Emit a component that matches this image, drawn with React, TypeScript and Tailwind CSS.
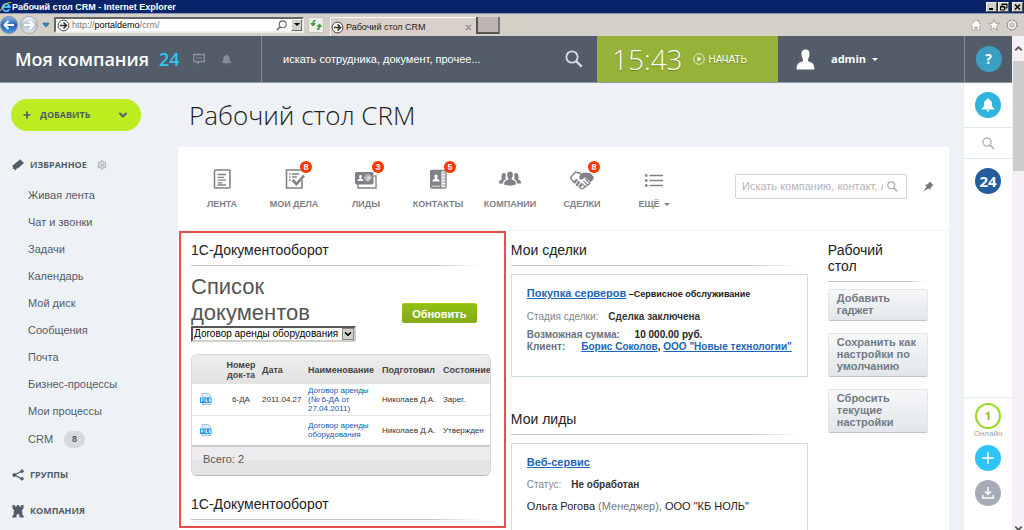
import type { ReactNode } from "react"
import { ChevronDown, ChevronUp, Plus, Settings } from "lucide-react"

const menu = [
  "Живая лента",
  "Чат и звонки",
  "Задачи",
  "Календарь",
  "Мой диск",
  "Сообщения",
  "Почта",
  "Бизнес-процессы",
  "Мои процессы",
]

const documents = [
  { number: "6-ДА", date: "2011.04.27", name: "Договор аренды (№ 6-ДА от 27.04.2011)", author: "Николаев Д.А.", state: "Зарег." },
  { number: "", date: "", name: "Договор аренды оборудования", author: "Николаев Д.А.", state: "Утвержден" },
]

function PageIcon({ className }: { className?: string }) {
  return (
    <svg viewBox="0 0 14 14" className={className} fill="none" stroke="#333" aria-hidden="true">
      <circle cx="7" cy="7" r="5.8" fill="#fff" />
      <path d="M3 7h7M7 3.8 10.2 7 7 10.2" strokeWidth="1.8" />
    </svg>
  )
}

function SearchIcon({ className }: { className?: string }) {
  return (
    <svg viewBox="0 0 20 20" className={className} fill="none" stroke="currentColor" aria-hidden="true">
      <circle cx="7.800" cy="7.800" r="6.300" strokeWidth="2" />
      <path d="m12.500 12.500 6 6" strokeWidth="2.600" />
    </svg>
  )
}

function BellIcon({ className }: { className?: string }) {
  return (
    <svg viewBox="0 0 14 14" className={className} fill="currentColor" aria-hidden="true">
      <path d="M7 .5c.8 0 1.200.5 1.200 1.200C10.500 2.400 11 4.300 11 6.200c0 2.600.6 3.300 2.200 4.300v1H.8v-1C2.400 9.500 3 8.800 3 6.200c0-1.900.5-3.800 2.800-4.500C5.800 1 6.200.5 7 .5zM5.500 12.200h3c0 .8-.6 1.300-1.500 1.300s-1.500-.5-1.500-1.300z" />
    </svg>
  )
}

function BrowserChrome() {
  return (
    <div>
      <div className="flex h-[13px] items-center bg-[#0a246a] text-white">
        <svg viewBox="0 0 14 14" className="h-3 w-3 shrink-0" fill="none" aria-hidden="true">
          <path d="M11 9.5A4.200 4.200 0 1 1 11.400 7H3.400" stroke="#4db8f5" strokeWidth="2.200" />
          <path d="M1 12C-.5 9 8 0 13 2" stroke="#f5c542" strokeWidth="1.100" />
        </svg>
        <span className="flex-1 font-['Liberation_Sans',sans-serif] text-[9px] leading-3 font-bold">
          Рабочий стол CRM - Internet Explorer
        </span>
        <div className="flex gap-px pr-px">
          <button aria-label="Свернуть" className="flex h-[10px] w-[11px] items-end border border-[#f5f3ef] border-r-[#555] border-b-[#555] bg-[#d4d0c8] pb-px pl-0.5">
            <span className="h-0.5 w-1 bg-black" />
          </button>
          <button aria-label="Восстановить" className="h-[10px] w-[11px] border border-[#f5f3ef] border-r-[#555] border-b-[#555] bg-[#d4d0c8]">
            <svg viewBox="0 0 9 8" fill="none" stroke="#000" aria-hidden="true">
              <path d="M3 3V1h5v4H6M3 1.500h5" />
              <path d="M1.500 3.500h4v3.500h-4zM1 4h5" />
            </svg>
          </button>
          <button aria-label="Закрыть" className="ml-0.5 h-[10px] w-[11px] border border-[#f5f3ef] border-r-[#555] border-b-[#555] bg-[#d4d0c8]">
            <svg viewBox="0 0 9 8" stroke="#000" strokeWidth="1.400" aria-hidden="true">
              <path d="m2 1.500 5 5M7 1.500l-5 5" />
            </svg>
          </button>
        </div>
      </div>
      <div className="flex h-[23px] items-center border-t border-[#8b97b8] bg-[#d4d0c8] text-[9px] text-[#222]">
        <button aria-label="Назад" className="h-[18px] w-[18px] rounded-full border border-[#7b8ba3] bg-linear-to-b from-[#7fb0ea] via-[#2660b8] to-[#3f9be6]">
          <svg viewBox="0 0 16 16" fill="none" stroke="#fff" strokeWidth="2" aria-hidden="true">
            <path d="M13 8H4M7.500 4 3.500 8l4 4" />
          </svg>
        </button>
        <button aria-label="Вперёд" className="ml-0.5 h-[18px] w-[18px] rounded-full border border-[#a4a9b1] bg-linear-to-b from-[#f3f4f6] via-[#b5c0cf] to-[#dde4ec]">
          <svg viewBox="0 0 16 16" fill="none" stroke="#fff" strokeWidth="2" aria-hidden="true">
            <path d="M3 8h9M8.500 4l4 4-4 4" />
          </svg>
        </button>
        <svg viewBox="0 0 8 6" className="ml-1 h-[6px] w-2" fill="#2f83c4" stroke="#285b85" strokeWidth=".5" aria-hidden="true">
          <path d="M1 1h6v1L4 5 1 2z" />
        </svg>
        <div className="ml-1 flex h-4 w-[250px] items-center border-2 border-t-[#666] border-r-[#eee] border-b-[#eee] border-l-[#666] bg-white">
          <PageIcon className="mr-0.5 ml-px h-[13px] w-[13px] shrink-0" />
          <div role="textbox" aria-label="Адрес" className="flex flex-1 leading-3 whitespace-nowrap text-[#777]">
            http://<span className="text-black">portaldemo</span>/crm/
          </div>
          <SearchIcon className="h-[11px] w-[11px] -scale-x-100 text-[#666]" />
          <button aria-label="Список адресов" className="ml-1 flex h-3 w-[11px] items-center justify-center border border-white border-r-[#666] border-b-[#666] bg-[#d4d0c8]">
            <svg viewBox="0 0 6 4" className="w-1.5" aria-hidden="true">
              <path d="M0 0h6L3 3z" />
            </svg>
          </button>
        </div>
        <button aria-label="Обновить страницу" className="ml-1 flex h-4 w-4 items-center justify-center border border-[#c4c4c4] bg-[#eeedea]">
          <svg viewBox="0 0 14 14" className="w-3.5" fill="#3d9b35" stroke="#3d9b35" aria-hidden="true">
            <path d="M6.500 2.500Q4 2.500 4 6" fill="none" strokeWidth="1.500" />
            <path d="M1.800 5.500h4.400L4 8z" />
            <path d="M8 11.500q2.500 0 2.500-3.500" fill="none" strokeWidth="1.500" />
            <path d="M8.300 8.500h4.400L10.500 6z" />
          </svg>
        </button>
        <div className="ml-1.5 flex h-[19px] w-[146px] items-center self-end border-t border-l border-white bg-[#d9d0ca]">
          <PageIcon className="mr-0.5 h-[13px] w-[13px] shrink-0" />
          <span className="flex-1 leading-3">Рабочий стол CRM</span>
          <button aria-label="Закрыть вкладку" className="mr-1">
            <svg viewBox="0 0 8 8" className="h-[7px] w-[7px]" stroke="#888" strokeWidth="1.400" aria-hidden="true">
              <path d="m1 1 6 6M7 1 1 7" />
            </svg>
          </button>
        </div>
        <button aria-label="Новая вкладка" className="h-[17px] w-6 border-r-2 border-b-2 border-l-2 border-[#555] border-r-[#777] bg-[#bdb5b3]" />
        <div className="ml-auto flex gap-1.5 pr-1.5">
          <svg viewBox="0 0 12 12" className="h-3 w-3" fill="#fff" stroke="#999" strokeWidth=".8" aria-hidden="true">
            <path d="M6 .8.5 6.300l.9.900.8-.6v4.900h2.600V8h2.400v3.500h2.600V6.600l.8.600.9-.9L9.300 4V1.500H8v1.300z" />
          </svg>
          <svg viewBox="0 0 12 12" className="h-3 w-3" fill="#fff" stroke="#999" strokeWidth=".8" aria-hidden="true">
            <path d="m6 .5 1.500 3.800 4 .2-3.100 2.600 1 4L6 8.900l-3.400 2.200 1-4L.5 4.500l4-.2z" />
          </svg>
          <svg viewBox="0 0 12 12" className="h-3 w-3" fill="none" aria-hidden="true">
            <circle cx="6" cy="6" r="4.700" stroke="#999" strokeWidth="2" strokeDasharray="2.200 1.490" />
            <circle cx="6" cy="6" r="3.300" stroke="#999" strokeWidth="2.600" />
            <circle cx="6" cy="6" r="3.300" stroke="#fff" strokeWidth="1.400" />
          </svg>
        </div>
      </div>
    </div>
  )
}

function Header() {
  return (
    <header className="flex h-[47px] shrink-0 border-b border-[#8f98a3] bg-[#535c69] font-['Open_Sans','Noto_Sans',sans-serif] text-white">
      <div className="flex w-[262px] shrink-0 items-center border-r border-[#838b96] pl-[15px]">
        <span className="text-lg font-semibold">Моя компания</span>
        <span className="ml-2.5 text-lg font-semibold text-[#2fc6f6]">24</span>
        <button aria-label="Сообщения" className="ml-[13px]">
          <svg viewBox="0 0 12 12" className="h-3 w-3" fill="none" stroke="#8b929c" aria-hidden="true">
            <path d="M.7 1.500h10.600v7H6.500L4.500 10.500V8.500H.7z" strokeWidth="1.300" />
            <path d="M3 5h1.200M5.400 5h1.200M7.800 5H9" strokeWidth="1.300" />
          </svg>
        </button>
        <button aria-label="Уведомления" className="ml-4">
          <BellIcon className="h-[11px] w-[11px] text-[#858c97]" />
        </button>
      </div>
      <div className="flex flex-1 items-center pr-3.5 pl-[21px]">
        <input
          type="text"
          aria-label="Поиск"
          placeholder="искать сотрудника, документ, прочее..."
          className="min-w-0 flex-1 font-['Liberation_Sans',sans-serif] text-[11px] placeholder:text-white"
        />
        <button aria-label="Найти">
          <SearchIcon className="h-[18px] w-[18px] text-[#dadde1]" />
        </button>
      </div>
      <div className="flex w-[181px] shrink-0 items-center bg-[#95b239]">
        <span className="ml-[15px] text-[28px] font-light [text-shadow:0_1px_1px_#6b8322]">15:43</span>
        <button className="ml-2.5 flex items-center gap-1 font-['Liberation_Sans',sans-serif] text-[10px] [text-shadow:0_1px_1px_#6b8322]">
          <svg viewBox="0 0 12 12" className="h-3 w-3" fill="none" stroke="#e3ecc8" aria-hidden="true">
            <circle cx="6" cy="6" r="5.300" />
            <path d="M4.500 3.500v5L8.500 6z" fill="#fff" stroke="none" />
          </svg>
          НАЧАТЬ
        </button>
      </div>
      <button className="flex w-[186px] shrink-0 items-center pl-[18px] text-[11px] font-bold">
        <svg viewBox="0 0 20 22" className="h-[21px] w-[19px]" fill="#fff" aria-hidden="true">
          <path d="M10 .5c3.200 0 4.300 2 4.200 5.300C14 9 12.800 10 12.600 11.500c0 1 .6 1.500 2 2 3.500 1 4.600 2.500 4.800 8H.6c.2-5.500 1.300-7 4.800-8 1.400-.5 2-1 2-2C7.200 10 6 9 5.800 5.800 5.700 2.500 6.800.5 10 .5z" />
        </svg>
        <span className="ml-4">admin</span>
        <span className="ml-1.5 border-x-[3px] border-t-[3px] border-x-transparent border-t-white" />
      </button>
      <div className="flex w-12 shrink-0 items-center justify-center border-l border-[#838b96]">
        <button className="h-[26px] w-[26px] rounded-full bg-[#3a9fc1] text-sm font-bold">?</button>
      </div>
    </header>
  )
}

function SectionTitle({ icon, children }: { icon: ReactNode; children: ReactNode }) {
  return (
    <h3 className="flex h-[18px] items-center gap-1.5 font-['Open_Sans','Noto_Sans',sans-serif] text-[9px] font-bold">
      {icon}
      {children}
    </h3>
  )
}

function Sidebar() {
  return (
    <aside className="w-[178px] shrink-0 text-[#535c69]">
      <button className="mt-4 ml-[11px] flex h-8 w-[130px] items-center rounded-full bg-[#bbed21] pr-3 pl-[11px] font-['Open_Sans','Noto_Sans',sans-serif] text-[9px] font-bold">
        <Plus className="h-[10px] w-[10px]" strokeWidth={4} />
        <span className="ml-2 flex-1 text-left">ДОБАВИТЬ</span>
        <ChevronDown className="h-3 w-3" strokeWidth={4} />
      </button>
      <div className="mt-[25px] pl-3">
        <SectionTitle
          icon={
            <svg viewBox="0 0 12 12" className="h-3 w-3" fill="currentColor" aria-hidden="true">
              <path d="M8.300.3 9.500 1.500l.4 1 1 .3 1 1.200L6 9.200l-1.400.2-.9 2.300-1.100-1.500L.3 9.500l.9-1.300-.8-1.500z" />
            </svg>
          }
        >
          ИЗБРАННОЕ
          <Settings className="ml-1 h-[10px] w-[10px] text-[#b3b8be]" strokeWidth={3} />
        </SectionTitle>
      </div>
      <nav className="mt-2 pl-[28px] text-[11px]">
        {menu.map((item) => (
          <a key={item} href="#" className="block h-[27px] leading-[27px]">
            {item}
          </a>
        ))}
        <a href="#" className="flex h-[29px] items-center">
          CRM
          <span className="ml-[11px] h-[17px] w-[21px] rounded-full bg-[#d5dadc] text-center text-[9px] leading-[17px] font-bold">8</span>
        </a>
      </nav>
      <div className="mt-3 space-y-[18px] pl-3">
        <SectionTitle
          icon={
            <svg viewBox="0 0 12 12" className="h-3 w-3" fill="currentColor" stroke="currentColor" aria-hidden="true">
              <path d="M10 2 2.500 6l7.500 4" fill="none" strokeWidth="1.400" />
              <circle cx="10" cy="2.200" r="1.300" />
              <circle cx="2.300" cy="6" r="1.500" />
              <circle cx="10" cy="9.800" r="1.300" />
            </svg>
          }
        >
          ГРУППЫ
        </SectionTitle>
        <SectionTitle
          icon={
            <svg viewBox="0 0 12 13" className="h-[13px] w-3" fill="currentColor" aria-hidden="true">
              <path d="M.5 0h2.300v1.500h2V0h2.400v1.500h2V0h2.300v3.500L10 5l.5 5 1.200 1v1.500H7.500v-2a1.500 1.500 0 0 0-3 0v2H.3V11l1.200-1L2 5 .5 3.500z" />
            </svg>
          }
        >
          КОМПАНИЯ
        </SectionTitle>
      </div>
    </aside>
  )
}

const tabs: { title: string; count?: number; more?: boolean; icon: ReactNode }[] = [
  {
    title: "ЛЕНТА",
    icon: (
      <g fill="none" stroke="currentColor">
        <rect x="3.500" y="2" width="15.500" height="18" rx="1" strokeWidth="1.600" />
        <path d="M6.500 6.500H15M6.500 9.300h6.500M6.500 12.100H15M6.500 14.900h5M6.500 17H15" strokeWidth="1.300" />
      </g>
    ),
  },
  {
    title: "МОИ ДЕЛА",
    count: 8,
    icon: (
      <g fill="none" stroke="currentColor">
        <path d="M19 12v8H3.500V2H19" strokeWidth="1.600" />
        <path d="M6 6h1.500M9 6h7M6 9h1.500M9 9h5M6 12h1.500" strokeWidth="1.300" />
        <path d="m9.500 12 4 4L21 7.500" strokeWidth="2.600" />
      </g>
    ),
  },
  {
    title: "ЛИДЫ",
    count: 3,
    icon: (
      <g>
        <path d="M3 16v4h18V8h-2" fill="none" stroke="currentColor" strokeWidth="1.400" />
        <rect x="0" y="4" width="18.500" height="12.500" rx="1.500" fill="currentColor" />
        <path d="M5.500 7c1.600 0 1.600 2.500.6 3.700 1.700.5 2.300.8 2.300 2.300H2.600c0-1.500.6-1.800 2.300-2.300C3.900 9.500 3.900 7 5.500 7z" fill="#fff" />
        <circle cx="13" cy="10" r="1.300" fill="none" stroke="#fff" />
        <path d="M14.500 8.500v2.500c.8.500 1.500-.2 1.500-1.200A3 3 0 1 0 14.500 12.500" fill="none" stroke="#fff" strokeWidth=".8" />
      </g>
    ),
  },
  {
    title: "КОНТАКТЫ",
    count: 5,
    icon: (
      <g>
        <rect x="4" y="2.500" width="15" height="17.500" rx="1" fill="#fff" stroke="currentColor" strokeWidth="1.300" />
        <path d="M4.500 2H14.500v18H4.500C3.500 20 3 19.500 3 18.500v-15C3 2.500 3.500 2 4.500 2z" fill="currentColor" />
        <path d="M15.500 5h3M15.500 8h3M15.500 11h3M15.500 14h3M15.500 17h3" stroke="currentColor" />
        <path d="M9 6.500c1.900 0 1.900 3 .8 4.300 1.900.5 2.700.9 2.700 2.700h-7c0-1.800.8-2.200 2.700-2.700C7.100 9.500 7.100 6.500 9 6.500z" fill="#fff" />
        <path d="M4.500 18.200H13" stroke="#fff" strokeWidth=".8" />
      </g>
    ),
  },
  {
    title: "КОМПАНИИ",
    icon: (
      <g fill="currentColor">
        <path d="M5 5c2 0 2.400 2.500 1.200 4.800 1 1 .8 1.200 0 1.800-1.600.8-2 2-2 3.900H-.2c0-2.500.8-3 3.200-4.200C1.800 9.500 2.500 5 5 5zM17 5c-2 0-2.400 2.500-1.200 4.800-1 1-.8 1.200 0 1.800 1.600.8 2 2 2 3.900h4.400c0-2.500-.8-3-3.200-4.200C20.200 9.500 19.500 5 17 5z" />
        <path d="M11 3.500c3.300 0 3.600 4 1.700 6.800-.2 1.200.5 1.400 1.800 1.900 2 .8 2.300 1.800 2.300 4.300-3 1.300-8.600 1.300-11.600 0 0-2.500.3-3.500 2.300-4.300 1.300-.5 2-.7 1.800-1.900C7.400 7.500 7.700 3.500 11 3.500z" />
      </g>
    ),
  },
  {
    title: "СДЕЛКИ",
    count: 8,
    icon: (
      <g>
        <path d="M10 5.500 4.500 4-.5 9.500 1.500 13l2 1" fill="none" stroke="currentColor" strokeWidth="1.400" />
        <path d="M9.500 6 13 4.500l6.500.8 3.500 4-1.500 3.200-2 1.500-5.500-4.500-4 2.500L8 10z" fill="currentColor" />
        <path d="m3.500 14.500 2-2.500M5.800 17 8 14M8.500 18.800l2-2.500" stroke="currentColor" strokeWidth="2.200" strokeLinecap="round" />
        <path d="m9 20 2.500.8 8-5.800M12.500 13l4 4M10.500 15.500l4 3.500M14.500 11l4.500 4.500" fill="none" stroke="currentColor" strokeWidth="1.100" />
      </g>
    ),
  },
  {
    title: "ЕЩЁ",
    more: true,
    icon: (
      <g stroke="currentColor" strokeWidth="1.700">
        <path d="M6.500 7.500H20M6.500 12.500H20M6.500 17.500H20" />
        <path d="M2 7.500h2.500M2 12.500h2.500M2 17.500h2.500" strokeWidth="2.500" />
      </g>
    ),
  },
]

function CrmTabs() {
  return (
    <div className="flex h-[84px] items-start border-b border-[#f2f3f4] pt-[21px] pr-[15px] pl-2">
      <nav className="flex text-[#808287]">
        {tabs.map((tab) => (
          <a key={tab.title} href="#" className="flex w-18 flex-col items-center text-[9px] font-bold">
            <span className="relative">
              <svg viewBox="0 0 22 22" className="h-[22px] w-[22px] overflow-visible" aria-hidden="true">
                {tab.icon}
              </svg>
              {tab.count && (
                <span className="absolute -top-[7px] left-[17px] h-3 w-3 rounded-full bg-[#ff3500] text-center text-[9px] leading-3 text-white">
                  {tab.count}
                </span>
              )}
            </span>
            <span className="mt-1.5 flex items-center leading-4">
              {tab.title}
              {tab.more && <span className="ml-1 border-x-[3px] border-t-[3px] border-x-transparent border-t-[#808287]" />}
            </span>
          </a>
        ))}
      </nav>
      <div className="mt-1.5 ml-auto flex h-[25px] w-[172px] items-center rounded-xs border border-[#d4d3d8] pr-2 pl-1.5">
        <input
          type="text"
          aria-label="Поиск в CRM"
          placeholder="Искать компанию, контакт, лид"
          className="min-w-0 flex-1 text-[11px] placeholder:text-[#b4b5b9]"
        />
        <button aria-label="Искать" className="ml-1">
          <SearchIcon className="h-[11px] w-[11px] text-[#aaa]" />
        </button>
      </div>
      <button aria-label="Закрепить" className="mt-[13px] ml-4">
        <svg viewBox="0 0 12 12" className="h-[11px] w-[11px]" fill="#737579" aria-hidden="true">
          <path d="m7.500.5 4 4-1.200.5-2 2.500-.3 2.500-2-2L.5 11.500 4 6 2 4l2.500-.3 2.500-2z" />
        </svg>
      </button>
    </div>
  )
}

function GadgetTitle({ children }: { children: ReactNode }) {
  return (
    <div>
      <h2 className="text-sm leading-4 text-[#222]">{children}</h2>
      <div className="mt-[7px] h-px bg-linear-to-r from-[#c4c4c4] from-80% to-transparent to-97%" />
    </div>
  )
}

function FileIcon() {
  return (
    <svg viewBox="0 0 12 12" className="mx-auto h-3 w-3" aria-hidden="true">
      <path d="M2 .5h6.500l2 2v9H2z" fill="#dcebf8" stroke="#8db8dc" strokeWidth=".8" />
      <path d="M0 4.500h11.500v5.500H0z" fill="#1c96e8" />
      <path d="M1.500 9V5.800h2M1.500 7.400h1.700M5 5.500V9M6.500 5.500v3.200H8M11 5.800H9.300v3H11M9.300 7.300h1.500" fill="none" stroke="#fff" strokeWidth=".8" />
    </svg>
  )
}

function DocumentsGadget() {
  return (
    <section className="border-2 border-[#e8504c] pt-[9px] pr-[13px] pb-1.5 pl-2.5">
      <GadgetTitle>1С-Документооборот</GadgetTitle>
      <div className="mt-2 flex items-end justify-between pr-3.5">
        <h1 className="w-40 text-[22px] leading-[26px] text-[#555]">Список документов</h1>
        <button className="mb-[3px] h-5 w-[75px] rounded-xs border-t border-[#a9d012] bg-linear-to-b from-[#8fc011] to-[#86aa18] text-[11px] leading-4 font-bold text-white">
          Обновить
        </button>
      </div>
      <div className="flex h-4 w-[165px] border-2 border-t-[#555] border-r-[#d4d0c8] border-b-[#d4d0c8] border-l-[#555]">
        <select aria-label="Вид документа" className="min-w-0 flex-1 appearance-none truncate bg-white pl-px text-[10px] leading-3 text-black">
          <option>Договор аренды оборудования</option>
        </select>
        <span className="flex w-3 items-center justify-center border border-[#888] bg-[#d4d0c8]">
          <ChevronDown className="h-2.5 w-2.5 text-black" strokeWidth={4} />
        </span>
      </div>
      <div className="mt-3 overflow-hidden rounded-md border border-[#d5d7da] border-b-[#bbb]">
        <table className="w-full table-fixed text-left text-[8px] leading-[9px] text-[#333]">
          <colgroup>
            <col className="w-7" />
            <col className="w-[42px]" />
            <col className="w-[46px]" />
            <col className="w-[74px]" />
            <col className="w-[61px]" />
            <col />
          </colgroup>
          <thead className="h-[29px] bg-linear-to-b from-[#ededed] to-[#e3e2e3] text-[9px] leading-[10px] text-[#444]">
            <tr>
              <th />
              <th className="text-center">Номер док-та</th>
              <th>Дата</th>
              <th>Наименование</th>
              <th>Подготовил</th>
              <th>Состояние</th>
            </tr>
          </thead>
          <tbody>
            {documents.map((doc) => (
              <tr key={doc.name} className="h-[31px] border-b border-[#e3e5e8]">
                <td><FileIcon /></td>
                <td className="text-center">{doc.number}</td>
                <td>{doc.date}</td>
                <td className="pr-2">
                  <a href="#" className="text-[#1058b0]">{doc.name}</a>
                </td>
                <td>{doc.author}</td>
                <td>{doc.state}</td>
              </tr>
            ))}
          </tbody>
          <tfoot className="bg-linear-to-b from-[#eeebee] from-50% to-[#e4e4e4] to-50% text-[11px] text-[#555]">
            <tr className="h-[29px] border-t-2 border-[#ccc]">
              <td colSpan={6} className="pb-1 pl-[11px]">Всего: 2</td>
            </tr>
          </tfoot>
        </table>
      </div>
      <div className="mt-5">
        <GadgetTitle>1С-Документооборот</GadgetTitle>
      </div>
    </section>
  )
}

function DealsGadgets() {
  const link = "text-[#1a66b8] underline"
  return (
    <div className="pt-[11px] pr-5 pl-[5px] text-[10px] text-[#222]">
      <GadgetTitle>Мои сделки</GadgetTitle>
      <div className="mt-2 h-[103px] border border-[#cfdde3] px-[15px] pt-3 font-bold whitespace-nowrap">
        <p className="text-[9px] leading-3">
          <a href="#" className={`${link} text-[11px]`}>Покупка серверов</a> –Сервисное обслуживание
        </p>
        <p className="mt-[11px] leading-3">
          <span className="mr-2.5 font-normal text-[#80868e]">Стадия сделки:</span>
          <span className="text-[#333]">Сделка заключена</span>
        </p>
        <p className="mt-1.5 leading-3">
          <span className="mr-3 text-[#6b737c]">Возможная сумма:</span> 10 000.00 руб.
        </p>
        <p className="leading-3">
          <span className="mr-4 text-[#6b737c]">Клиент:</span>
          <a href="#" className={link}>Борис Соколов</a>,{" "}
          <a href="#" className={link}>ООО "Новые технологии"</a>
        </p>
      </div>
      <div className="mt-[34px]">
        <GadgetTitle>Мои лиды</GadgetTitle>
      </div>
      <div className="mt-2 h-[103px] border border-[#cfdde3] px-[15px] pt-3 whitespace-nowrap">
        <a href="#" className={`${link} block text-[11px] leading-3 font-bold`}>Веб-сервис</a>
        <p className="mt-[11px] leading-3">
          <span className="mr-2.5 text-[#80868e]">Статус:</span>
          <b className="text-[#333]">Не обработан</b>
        </p>
        <p className="mt-2 text-[11px] leading-[14px]">
          Ольга Рогова <span className="text-[#777]">(Менеджер),</span> ООО "КБ НОЛЬ"
        </p>
      </div>
    </div>
  )
}

function DesktopGadget() {
  return (
    <div className="pt-[11px] pr-[21px]">
      <GadgetTitle>
        <span className="block w-20">Рабочий стол</span>
      </GadgetTitle>
      <div className="mt-[7px] flex flex-col gap-3">
        {["Добавить гаджет", "Сохранить как настройки по умолчанию", "Сбросить текущие настройки"].map((label) => (
          <button
            key={label}
            className="rounded-xs border border-[#e3e6e9] border-b-[#c2c7cc] bg-linear-to-b from-[#f6f8f9] to-[#e2e6ea] px-2 pt-0.5 pb-1 text-left text-[11px] leading-3 font-bold text-[#737b85]"
          >
            {label}
          </button>
        ))}
      </div>
    </div>
  )
}

function Rail() {
  return (
    <aside className="flex w-12 shrink-0 flex-col items-center bg-white font-['Open_Sans','Noto_Sans',sans-serif]">
      <button aria-label="Уведомления" className="mt-[9px] flex h-[26px] w-[26px] items-center justify-center rounded-full bg-[#2fb5dc] text-white">
        <BellIcon className="h-[14px] w-[14px]" />
      </button>
      <button aria-label="Поиск" className="mt-[9px] flex h-8 w-full items-center justify-center border-y border-[#e6ebef]">
        <SearchIcon className="h-[13px] w-[13px] text-[#a9b0ba]" />
      </button>
      <button className="mt-[9px] h-[26px] w-[26px] rounded-full bg-[#235d9e] text-[15px] leading-[26px] font-bold text-white">24</button>
      <div className="mt-auto flex w-full flex-col items-center border-t border-[#e8edf0] pt-[5px] pb-6">
        <button className="h-[26px] w-[26px] rounded-full border-2 border-[#9ad81c] text-[11px] leading-[22px] font-bold text-[#7fc01a]">1</button>
        <span className="font-['Liberation_Sans',sans-serif] text-[8px] leading-[10px] text-[#999fa9]">Онлайн</span>
        <button aria-label="Добавить" className="mt-1.5 flex h-[26px] w-[26px] items-center justify-center rounded-full bg-[#30c3f8] text-white">
          <Plus className="h-[18px] w-[18px]" strokeWidth={2} />
        </button>
        <button aria-label="Скачать" className="mt-[9px] h-[26px] w-[26px] rounded-full bg-[#a5abb7] p-[7px]">
          <svg viewBox="0 0 12 12" fill="none" stroke="#fff" strokeWidth="1.500" aria-hidden="true">
            <path d="M6 0v7M3 4.500l3 3 3-3M.7 8v3h10.600V8" />
          </svg>
        </button>
      </div>
    </aside>
  )
}

export default function App() {
  return (
    <div className="flex h-screen flex-col overflow-hidden bg-[#eef1f6] font-['Liberation_Sans',sans-serif]">
      <BrowserChrome />
      <div className="flex min-h-0 flex-1">
        <div className="flex min-w-0 flex-1 flex-col">
          <Header />
          <div className="flex min-h-0 flex-1">
            <Sidebar />
            <main className="mr-[15px] flex min-w-0 flex-1 flex-col">
              <h1 className="h-16 shrink-0 pl-[11px] font-['Open_Sans','Noto_Sans',sans-serif] text-[26px] leading-[64px] font-light text-[#222]">
                Рабочий стол CRM
              </h1>
              <div className="flex-1 bg-white">
                <CrmTabs />
                <div className="grid grid-cols-[329fr_319fr_122fr] items-start pl-px">
                  <DocumentsGadget />
                  <DealsGadgets />
                  <DesktopGadget />
                </div>
              </div>
            </main>
            <Rail />
          </div>
        </div>
        <div className="flex w-3 shrink-0 flex-col items-center bg-[#f5f0f5]">
          <ChevronUp className="my-[7px] h-[11px] w-[11px] shrink-0 text-[#555]" strokeWidth={4} />
          <div className="h-[110px] w-[11px] bg-[#cdcdcd]" />
          <ChevronDown className="mt-auto -mb-1 h-[11px] w-[11px] shrink-0 text-[#555]" strokeWidth={4} />
        </div>
      </div>
    </div>
  )
}
